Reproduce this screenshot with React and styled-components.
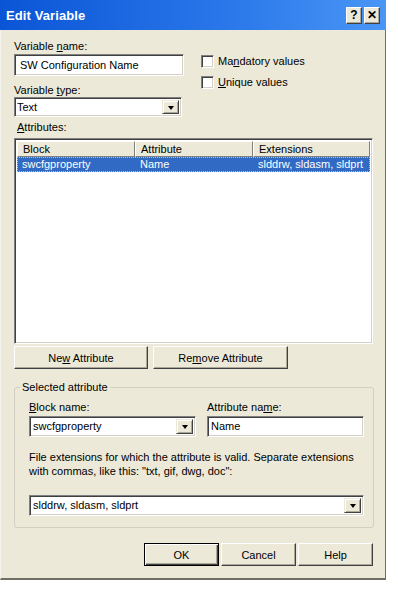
import React from 'react'
import styled, { createGlobalStyle } from "styled-components";

const GlobalStyle = createGlobalStyle`
    body {
        margin: 0;
        background: #ffffff;
        font-family: "Liberation Sans", Arial, sans-serif;
        font-size: 11px;
        color: #000;
    }
`;

//----------------------------------------------------------------------

const Window = styled.div`
    width: 386px;
    height: 580px;
    box-sizing: border-box;
    background: #ece9d8;
    border-left: 1px solid #f4f3ee;
    border-top: 1px solid #f4f3ee;
    border-right: 1px solid #716f64;
    border-bottom: 2px solid #716f64;
    display: flex;
    flex-direction: column;
`;
const TitleBar = styled.div`
    height: 30px;
    margin: -1px -1px 0 -1px;
    display: flex;
    align-items: center;
    padding: 0 6px 0 6px;
    background: linear-gradient(to right, #0a55d6 0%, #2a78ea 60%, #4a96f6 100%);
    color: white;
    font-size: 13px;
    font-weight: 700;
`;
const TitleText = styled.div`
    flex: 1;
    letter-spacing: 0.1px;
`;
const TitleButton = styled.div`
    width: 16px;
    height: 17px;
    margin-left: 2px;
    box-sizing: border-box;
    background: #ece9d8;
    border-top: 1px solid #fff;
    border-left: 1px solid #fff;
    border-right: 1px solid #404040;
    border-bottom: 1px solid #404040;
    box-shadow: inset -1px -1px 0 #aca899;
    color: #000;
    font-size: 12px;
    font-weight: 700;
    display: flex;
    align-items: center;
    justify-content: center;
`;
const Content = styled.div`
    padding: 9px 12px 0 13px;
    display: flex;
    flex-direction: column;
`;
const TopRow = styled.div`
    display: flex;
`;
const LeftCol = styled.div`
    width: 170px;
    display: flex;
    flex-direction: column;
`;
const RightCol = styled.div`
    margin-left: 17px;
    padding-top: 16px;
    display: flex;
    flex-direction: column;
    gap: 8px;
`;
const Label = styled.div`
    line-height: 13px;
    height: 13px;
    margin-top: ${p => p.top || 0}px;
    padding-left: ${p => p.indent || 0}px;
    white-space: nowrap;
    u { text-decoration: underline; }
`;
const Sunken = styled.div`
    box-sizing: border-box;
    height: ${p => p.h || 21}px;
    width: ${p => p.w ? p.w + "px" : "auto"};
    margin-top: ${p => p.top || 0}px;
    background: #fff;
    border-top: 1px solid #808080;
    border-left: 1px solid #808080;
    border-right: 1px solid #fff;
    border-bottom: 1px solid #fff;
    box-shadow: inset 1px 1px 0 #404040, inset -1px -1px 0 #d4d0c8;
    display: flex;
    align-items: center;
    padding-left: ${p => p.pad || 4}px;
    padding-right: 2px;
    line-height: 13px;
`;
const Value = styled.span`
    flex: 1;
    white-space: nowrap;
    overflow: hidden;
`;
const ArrowButton = styled.div`
    width: 17px;
    height: calc(100% - 4px);
    box-sizing: border-box;
    background: #ece9d8;
    border-top: 1px solid #ece9d8;
    border-left: 1px solid #ece9d8;
    border-right: 1px solid #404040;
    border-bottom: 1px solid #404040;
    box-shadow: inset 1px 1px 0 #fff, inset -1px -1px 0 #aca899;
    display: flex;
    align-items: center;
    justify-content: center;
    &::after {
        content: "";
        width: 0;
        height: 0;
        border-left: 3.5px solid transparent;
        border-right: 3.5px solid transparent;
        border-top: 4px solid #000;
        margin-top: 1px;
    }
`;
const CheckRow = styled.div`
    display: flex;
    align-items: center;
    height: 13px;
    gap: 4px;
    line-height: 13px;
`;
const CheckBox = styled.div`
    width: 13px;
    height: 13px;
    box-sizing: border-box;
    background: #fff;
    border-top: 1px solid #808080;
    border-left: 1px solid #808080;
    border-right: 1px solid #fff;
    border-bottom: 1px solid #fff;
    box-shadow: inset 1px 1px 0 #404040, inset -1px -1px 0 #d4d0c8;
`;

//----------------------------------------------------------------------

const ListView = styled.div`
    margin-top: 4px;
    height: 206px;
    box-sizing: border-box;
    background: #fff;
    border-top: 1px solid #808080;
    border-left: 1px solid #808080;
    border-right: 1px solid #fff;
    border-bottom: 1px solid #fff;
    box-shadow: inset 1px 1px 0 #404040, inset -1px -1px 0 #d4d0c8;
    padding: 2px 2px 2px 2px;
    display: flex;
    flex-direction: column;
`;
const Row = styled.div`
    display: grid;
    grid-template-columns: 118px 118px 1fr;
    height: ${p => p.header ? 16 : 15}px;
    line-height: ${p => p.header ? 16 : 15}px;
    background: ${p => p.selected ? "#316ac5" : p.header ? "#ece9d8" : "transparent"};
    color: ${p => p.selected ? "#fff" : "#000"};
    outline: ${p => p.selected ? "1px dotted #b0c4ee" : "none"};
    outline-offset: -1px;
`;
const HeadCell = styled.div`
    box-sizing: border-box;
    padding-left: 5px;
    border-top: 1px solid #fff;
    border-left: 1px solid #fff;
    border-right: 1px solid #808080;
    border-bottom: 1px solid #808080;
    line-height: 14px;
    white-space: nowrap;
    overflow: hidden;
`;
const Cell = styled.div`
    padding-left: 5px;
    white-space: nowrap;
    overflow: hidden;
`;
const ButtonRow = styled.div`
    display: flex;
    justify-content: ${p => p.end ? "flex-end" : "flex-start"};
    gap: ${p => p.gap || 5}px;
    margin-top: ${p => p.top || 0}px;
`;
const Button = styled.div`
    width: ${p => p.w}px;
    height: 23px;
    box-sizing: border-box;
    background: #ece9d8;
    border-top: 1px solid #fff;
    border-left: 1px solid #fff;
    border-right: 1px solid #404040;
    border-bottom: 1px solid #404040;
    box-shadow: inset -1px -1px 0 #aca899;
    display: flex;
    align-items: center;
    justify-content: center;
    white-space: pre;
    ${p => p.primary && `
        border: 1px solid #000;
        box-shadow: inset 1px 1px 0 #fff, inset -1px -1px 0 #404040, inset -2px -2px 0 #aca899;
    `}
`;

//----------------------------------------------------------------------

const Group = styled.fieldset`
    margin: 12px 0 0 0;
    padding: 0;
    border: 1px solid #d0d0bf;
    border-radius: 3px;
    width: 360px;
    box-sizing: border-box;
`;
const Legend = styled.legend`
    margin-left: 5px;
    padding: 0 2px;
    line-height: 13px;
`;
const GroupBody = styled.div`
    padding: 7px 9px 11px 14px;
    display: flex;
    flex-direction: column;
`;
const GroupRow = styled.div`
    display: flex;
    gap: 11px;
`;
const Field = styled.div`
    width: ${p => p.w}px;
    display: flex;
    flex-direction: column;
`;
const Note = styled.div`
    margin-top: 13px;
    line-height: 14px;
    width: 335px;
`;

//----------------------------------------------------------------------
export default function App() {
  return (
    <>
      <GlobalStyle />
      <Window>
        <TitleBar>
          <TitleText>Edit Variable</TitleText>
          <TitleButton>?</TitleButton>
          <TitleButton>✕</TitleButton>
        </TitleBar>
        <Content>
          <TopRow>
            <LeftCol>
              <Label top={1}>Variable <u>n</u>ame:</Label>
              <Sunken top={1} h={22} pad={5}><Value>SW Configuration Name</Value></Sunken>
              <Label top={8}>Variable <u>t</u>ype:</Label>
              <Sunken h={20} pad={2} w={168}><Value>Text</Value><ArrowButton /></Sunken>
            </LeftCol>
            <RightCol>
              <CheckRow><CheckBox /><span>Ma<u>n</u>datory values</span></CheckRow>
              <CheckRow><CheckBox /><span><u>U</u>nique values</span></CheckRow>
            </RightCol>
          </TopRow>
          <Label top={4} indent={3}><u>A</u>ttributes:</Label>
          <ListView>
            <Row header>
              <HeadCell>Block</HeadCell>
              <HeadCell>Attribute</HeadCell>
              <HeadCell>Extensions</HeadCell>
            </Row>
            <Row selected>
              <Cell>swcfgproperty</Cell>
              <Cell>Name</Cell>
              <Cell>slddrw, sldasm, sldprt</Cell>
            </Row>
          </ListView>
          <ButtonRow top={2}>
            <Button w={134}><span>Ne<u>w</u> Attribute</span></Button>
            <Button w={135}><span>Re<u>m</u>ove Attribute</span></Button>
          </ButtonRow>
          <Group>
            <Legend>Selected attribute</Legend>
            <GroupBody>
              <GroupRow>
                <Field w={167}>
                  <Label><u>B</u>lock name:</Label>
                  <Sunken top={2} h={21} pad={3}><Value>swcfgproperty</Value><ArrowButton /></Sunken>
                </Field>
                <Field w={157}>
                  <Label>Attribute na<u>m</u>e:</Label>
                  <Sunken top={2} h={21} pad={3}><Value>Name</Value></Sunken>
                </Field>
              </GroupRow>
              <Note>File extensions for which the attribute is valid. Separate extensions with commas, like this: "txt, gif, dwg, doc":</Note>
              <Sunken top={17} h={21} pad={3}><Value>slddrw, sldasm, sldprt</Value><ArrowButton /></Sunken>
            </GroupBody>
          </Group>
          <ButtonRow end gap={2} top={15}>
            <Button w={75} primary>OK</Button>
            <Button w={75}>Cancel</Button>
            <Button w={75}>Help</Button>
          </ButtonRow>
        </Content>
      </Window>
    </>
  )
}
